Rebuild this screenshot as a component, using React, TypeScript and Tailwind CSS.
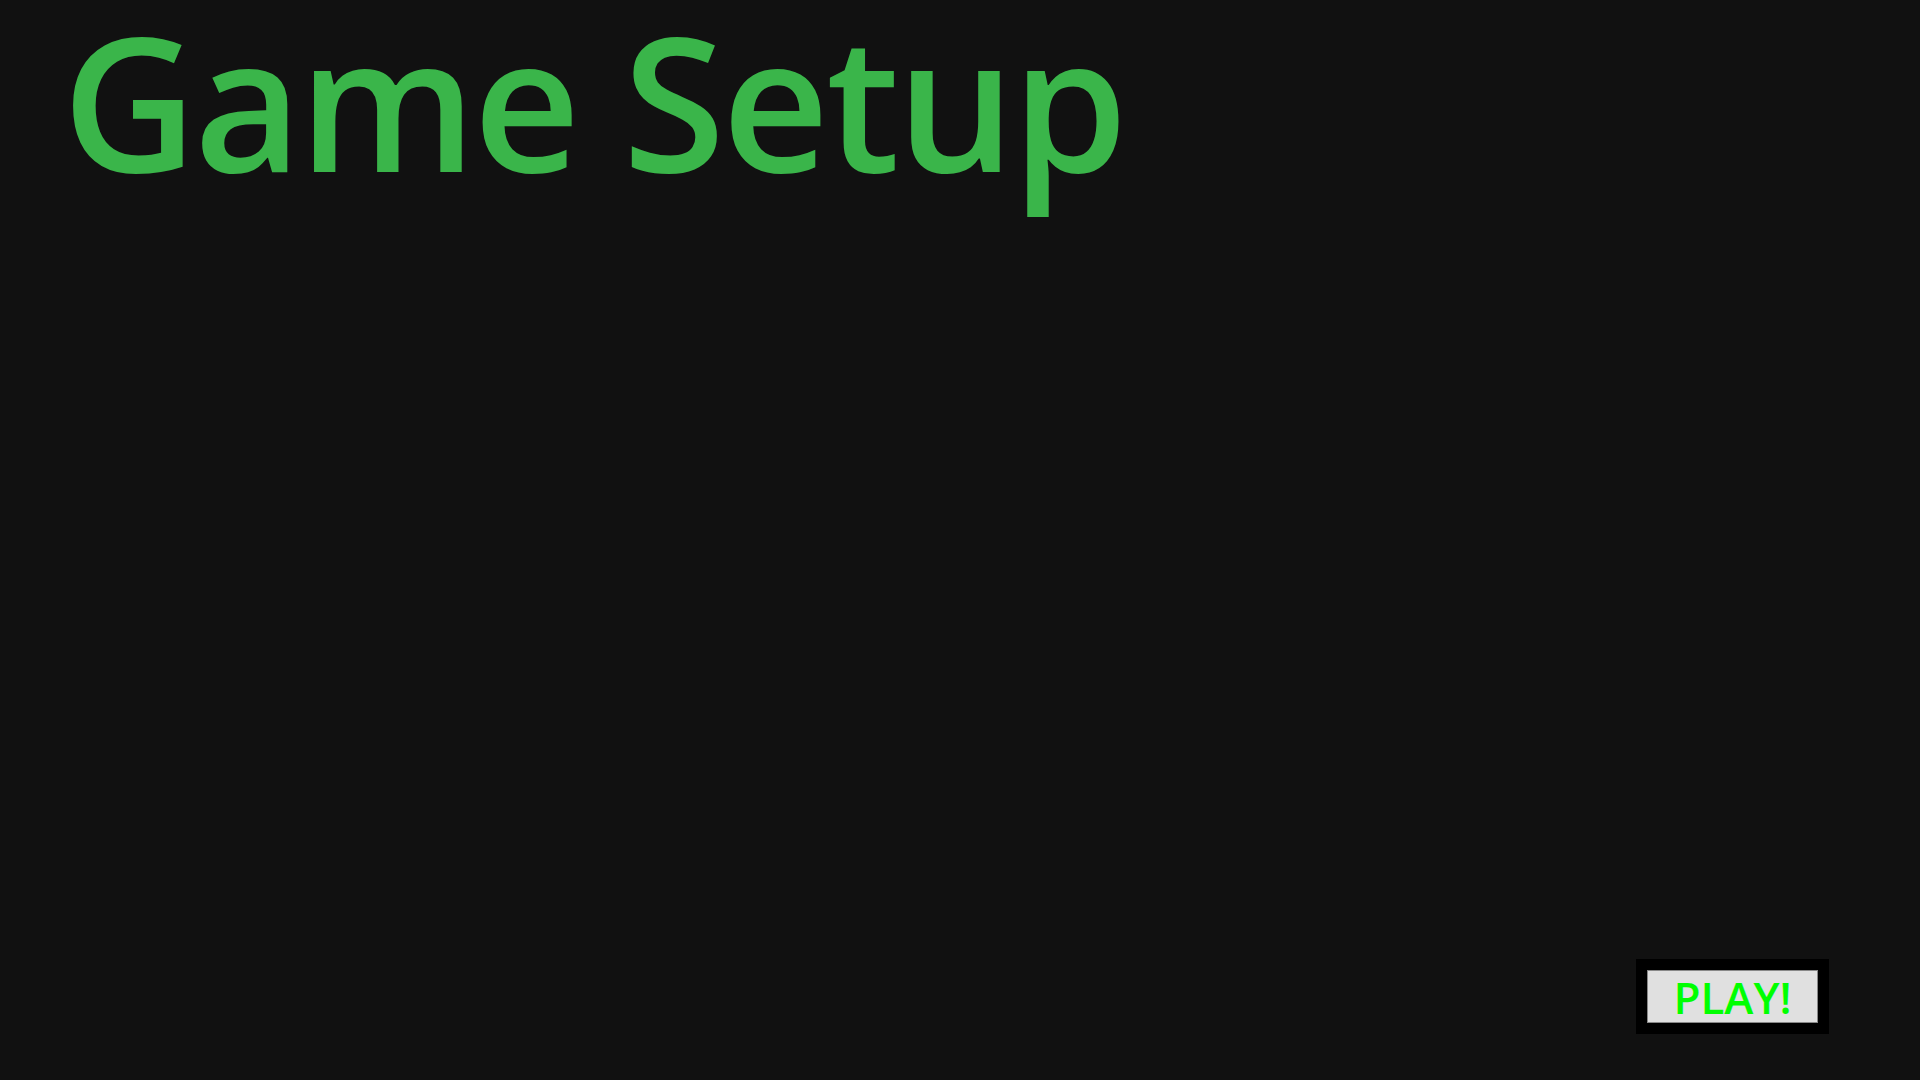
import React from 'react';

const App: React.FC = () => {
  return (
    <div className="min-h-screen w-full bg-[#111111] flex flex-col justify-between font-['Open_Sans',sans-serif]">
      <h1 className="pl-[62px] pt-[2px] text-[186px] leading-[1.05] tracking-[-3px] font-semibold text-[#3ab54a]">
        Game Setup
      </h1>
      <div className="flex justify-end pr-[91px] pb-[46px]">
        <div className="bg-black p-[11px]">
          <button className="w-[171px] h-[53px] bg-[#e0e0e0] border border-[#888888] text-[#00ff00] text-[44px] font-semibold leading-none flex items-center justify-center">
            PLAY!
          </button>
        </div>
      </div>
    </div>
  );
};

export default App;
